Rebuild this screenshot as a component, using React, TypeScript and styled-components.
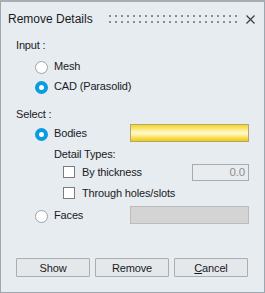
import React, { useState } from 'react';
import styled, { createGlobalStyle } from 'styled-components';

const GlobalStyle = createGlobalStyle`
    html, body {
        margin: 0;
        padding: 0;
        background: #e6ecf0;
    }
    * {
        box-sizing: border-box;
    }
`;

const Dialog = styled.div`
    width: 265px;
    height: 293px;
    display: flex;
    flex-direction: column;
    background: #e6ecf0;
    border: 1px solid #9fa7ae;
    border-top: 2px solid #a6aeb5;
    font-family: 'Liberation Sans', Arial, sans-serif;
    font-size: 11px;
    letter-spacing: -0.15px;
    color: #1a1a24;
    padding: 0 15px 15px 15px;
`;

const TitleBar = styled.div`
    display: flex;
    align-items: center;
    height: 16px;
    margin: 9px -6px 0 -8px;
`;

const Title = styled.div`
    font-size: 12px;
    letter-spacing: 0;
    white-space: nowrap;
`;

const Grip = styled.svg`
    margin-left: 16px;
    flex: none;
`;

const CloseButton = styled.svg`
    margin-left: 9px;
    flex: none;
`;

const SectionLabel = styled.div<{ $top: number; $indent?: number }>`
    height: 13px;
    line-height: 13px;
    margin-top: ${(p) => p.$top}px;
    margin-left: ${(p) => p.$indent ?? 0}px;
    white-space: nowrap;
`;

const Row = styled.div<{ $top: number; $indent: number }>`
    display: flex;
    align-items: center;
    height: 20px;
    margin-top: ${(p) => p.$top}px;
    padding-left: ${(p) => p.$indent}px;
    white-space: nowrap;
`;

const RadioDot = styled.span<{ $checked: boolean }>`
    width: 13px;
    height: 13px;
    margin-top: 2px;
    border-radius: 50%;
    flex: none;
    background: #fff;
    border: ${(p) => (p.$checked ? '4px solid #0b9be1' : '1px solid #a2a2a2')};
`;

const CheckBox = styled.span`
    width: 12px;
    height: 12px;
    flex: none;
    background: #fff;
    border: 1px solid #7c7c7c;
`;

const OptionText = styled.span<{ $gap: number; $width?: number }>`
    margin-left: ${(p) => p.$gap}px;
    width: ${(p) => (p.$width ? `${p.$width}px` : 'auto')};
    flex: none;
`;

const SelectionBox = styled.div<{ $active: boolean }>`
    margin-left: auto;
    width: 119px;
    height: 18px;
    border: 1px solid ${(p) => (p.$active ? '#b0a678' : '#bcbcbc')};
    background: ${(p) =>
        p.$active
            ? 'linear-gradient(to bottom, #f6d52a 0%, #fbe56e 22%, #fff7c4 45%, #fff3b0 60%, #f8dc4a 82%, #f2c912 100%)'
            : '#d4d4d4'};
`;

const NumberField = styled.div`
    margin-left: auto;
    width: 57px;
    height: 17px;
    line-height: 15px;
    border: 1px solid #aaaaaa;
    background: #e8ecef;
    color: #8e8e8e;
    text-align: right;
    padding-right: 3px;
    font-size: 11.5px;
`;

const ButtonRow = styled.div`
    margin-top: auto;
    display: flex;
    gap: 5px;
`;

const Button = styled.button`
    width: 74px;
    height: 19px;
    padding: 0;
    border: 1px solid #adadad;
    border-radius: 1px;
    background: #e4e8eb;
    font-family: 'Liberation Sans', Arial, sans-serif;
    font-size: 11px;
    letter-spacing: -0.15px;
    color: #1a1a24;
    cursor: pointer;

    & u {
        text-decoration-thickness: 1px;
        text-underline-offset: 1px;
    }
`;

const GripDots: React.FC = () => {
    const dots = [];
    for (let i = 0; i < 22; i++) {
        dots.push(<rect key={`a${i}`} x={i * 6} y={0} width={2} height={2} fill="#8a8d90" />);
        dots.push(<rect key={`b${i}`} x={i * 6} y={6} width={2} height={2} fill="#8a8d90" />);
    }
    return (
        <Grip width={128} height={8} viewBox="0 0 128 8">
            {dots}
        </Grip>
    );
};

const App: React.FC = () => {
    const [input, setInput] = useState<'mesh' | 'cad'>('cad');
    const [select, setSelect] = useState<'bodies' | 'faces'>('bodies');

    return (
        <>
            <GlobalStyle />
            <Dialog>
                <TitleBar>
                    <Title>Remove Details</Title>
                    <GripDots />
                    <CloseButton width={9} height={9} viewBox="0 0 9 9">
                        <path d="M0.5 0.5 L8.5 8.5 M8.5 0.5 L0.5 8.5" stroke="#3c3c3c" strokeWidth={1.2} />
                    </CloseButton>
                </TitleBar>

                <SectionLabel $top={12}>Input :</SectionLabel>
                <Row $top={4} $indent={19} onClick={() => setInput('mesh')}>
                    <RadioDot $checked={input === 'mesh'} />
                    <OptionText $gap={6}>Mesh</OptionText>
                </Row>
                <Row $top={0} $indent={19} onClick={() => setInput('cad')}>
                    <RadioDot $checked={input === 'cad'} />
                    <OptionText $gap={6}>CAD (Parasolid)</OptionText>
                </Row>

                <SectionLabel $top={12}>Select :</SectionLabel>
                <Row $top={2} $indent={19} onClick={() => setSelect('bodies')}>
                    <RadioDot $checked={select === 'bodies'} />
                    <OptionText $gap={6}>Bodies</OptionText>
                    <SelectionBox $active={select === 'bodies'} />
                </Row>
                <SectionLabel $top={5} $indent={38}>Detail Types:</SectionLabel>
                <Row $top={1} $indent={47}>
                    <CheckBox />
                    <OptionText $gap={7}>By thickness</OptionText>
                    <NumberField>0.0</NumberField>
                </Row>
                <Row $top={1} $indent={47}>
                    <CheckBox />
                    <OptionText $gap={7}>Through holes/slots</OptionText>
                </Row>
                <Row $top={2} $indent={19} onClick={() => setSelect('faces')}>
                    <RadioDot $checked={select === 'faces'} />
                    <OptionText $gap={6}>Faces</OptionText>
                    <SelectionBox $active={select === 'faces'} />
                </Row>

                <ButtonRow>
                    <Button>Show</Button>
                    <Button>Remove</Button>
                    <Button>
                        <u>C</u>ancel
                    </Button>
                </ButtonRow>
            </Dialog>
        </>
    );
};

export default App;
